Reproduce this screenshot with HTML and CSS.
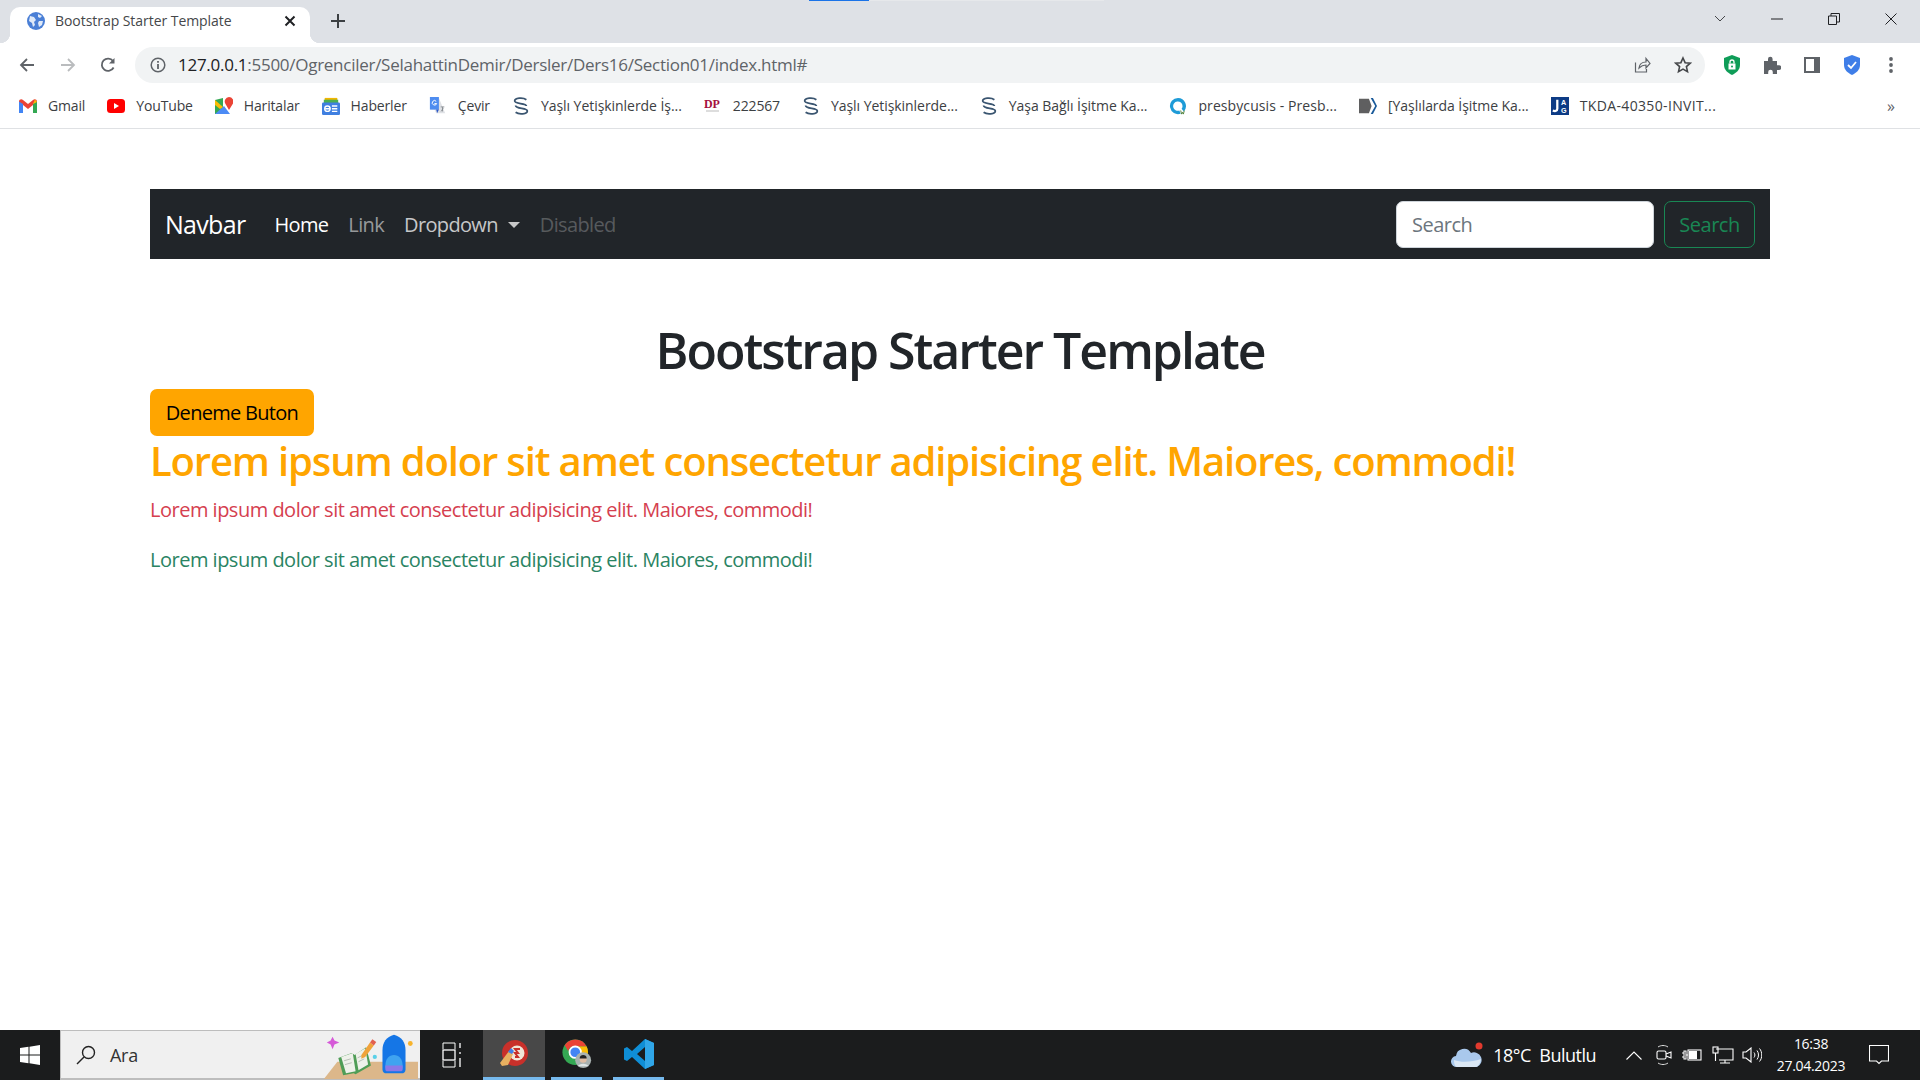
FILE: index.html
```html
<!DOCTYPE html>
<html lang="tr">
<head>
    <meta charset="utf-8">
    <title>Bootstrap Starter Template</title>
    <link rel="stylesheet" href="styles.css">
</head>
<body>
<div class="browser">
    <!-- sekme satiri -->
    <div class="tabstrip">
        <div class="load-line"><span></span></div>
        <div class="tab">
            <svg class="tab-icon" viewBox="0 0 18 18"><circle cx="9" cy="9" r="9" fill="#4a7fd6"/><path d="M3 4l4 1 2 3-2 2 1 3-2 2-1-4-3-2zM11 2l4 2-2 2-2-1zM12 9l4 0-1 4-3 2-1-4z" fill="#dfe9f8"/></svg>
            <span class="tab-title">Bootstrap Starter Template</span>
            <svg class="tab-close" viewBox="0 0 12 12"><path d="M1.5 1.5l9 9M10.5 1.5l-9 9" stroke="#202124" stroke-width="2"/></svg>
        </div>
        <svg class="new-tab" viewBox="0 0 14 14"><path d="M7 0v14M0 7h14" stroke="#3c4043" stroke-width="2"/></svg>
        <div class="window-controls">
            <svg class="wc-list" viewBox="0 0 12 8"><path d="M1 1l5 5 5-5" fill="none" stroke="#45474a" stroke-width="1"/></svg>
            <svg class="wc-min" viewBox="0 0 12 2"><path d="M0 1h12" stroke="#202124" stroke-width="1"/></svg>
            <svg class="wc-max" viewBox="0 0 12 12"><path d="M.5 3h8v8.500h-8zM3 3V.5h8.500v8.500H8.500" fill="none" stroke="#202124" stroke-width="1"/></svg>
            <svg class="wc-close" viewBox="0 0 12 12"><path d="M.5 .5l11 11M11.500 .5l-11 11" stroke="#202124" stroke-width="1"/></svg>
        </div>
    </div>

    <!-- adres satiri -->
    <div class="toolbar">
        <svg class="nav-icon" viewBox="0 0 16 16"><path d="M15 8H2M8 2L2 8l6 6" fill="none" stroke="#5f6368" stroke-width="1.800"/></svg>
        <svg class="nav-icon" viewBox="0 0 16 16"><path d="M1 8h13M8 2l6 6-6 6" fill="none" stroke="#babcbe" stroke-width="1.800"/></svg>
        <svg class="nav-icon" viewBox="0 0 16 16"><path d="M13.600 10.500A6.200 6.200 0 1 1 13 4" fill="none" stroke="#5f6368" stroke-width="1.800"/><path d="M14.500 1v5.500H9z" fill="#5f6368"/></svg>
        <div class="omnibox">
            <svg class="info-icon" viewBox="0 0 16 16"><circle cx="8" cy="8" r="6.800" fill="none" stroke="#5f6368" stroke-width="1.500"/><path d="M8 7v5M8 4v1.800" stroke="#5f6368" stroke-width="1.800"/></svg>
            <span class="url"><b>127.0.0.1</b>:5500/Ogrenciler/SelahattinDemir/Dersler/Ders16/Section01/index.html#</span>
            <svg class="omni-share" viewBox="0 0 18 18"><path d="M2.500 6.500v9.500h11v-3M6 12c.5-4 3-6 7-6V2.500L17 7.500l-4 4.500V9c-3 0-5 1-7 3z" fill="none" stroke="#5f6368" stroke-width="1.200"/></svg>
            <svg class="omni-star" viewBox="0 0 18 18"><path d="M9 2l2.100 4.700 5.100.5-3.800 3.400 1.100 5L9 13.100l-4.500 2.500 1.100-5L1.800 7.200l5.100-.5z" fill="none" stroke="#45474a" stroke-width="1.600"/></svg>
        </div>
        <div class="extensions">
            <svg viewBox="0 0 18 20"><path d="M9 0l8 3v7c0 5-4 8-8 10-4-2-8-5-8-10V3z" fill="#0f9d58"/><rect x="5.500" y="8.500" width="7" height="6" fill="#fff"/><path d="M7 8.500V7a2 2 0 0 1 4 0v1.500" fill="none" stroke="#fff" stroke-width="1.300"/><circle cx="9" cy="11.500" r="1" fill="#0f9d58"/></svg>
            <svg viewBox="0 0 18 18"><path d="M1 5h4V3a2.300 2.300 0 0 1 4.600 0v2H14v4.300h2a2.300 2.300 0 0 1 0 4.600h-2V18H9.800v-2a2.300 2.300 0 0 0-4.600 0v2H1z" fill="#5f6368"/></svg>
            <svg viewBox="0 0 18 18"><path d="M1 1h16v16H1z" fill="#5f6368"/><path d="M3 3h8v12H3z" fill="#fff"/></svg>
            <svg viewBox="0 0 18 20"><path d="M9 0l8 3v7c0 5-4 8-8 10-4-2-8-5-8-10V3z" fill="#3f7ee8"/><path d="M5 10l3 3 5-6" fill="none" stroke="#fff" stroke-width="1.800"/></svg>
            <svg viewBox="0 0 6 18"><circle cx="3" cy="3" r="1.900" fill="#5f6368"/><circle cx="3" cy="9" r="1.900" fill="#5f6368"/><circle cx="3" cy="15" r="1.900" fill="#5f6368"/></svg>
        </div>
    </div>

    <!-- yer imleri -->
    <div class="bookmarks">
        <a class="bookmark"><svg viewBox="0 0 18 14"><path d="M0 2.500V14h4V6l5 4 5-4v8h4V2.500C18 .500 15.500-.500 14 1L9 5 4 1C2.500-.500 0 .500 0 2.500z" fill="#ea4335"/><path d="M0 2.500V14h4V5z" fill="#4285f4"/><path d="M14 5v9h4V2.500z" fill="#34a853"/><path d="M16 .500L14 5l4-2z" fill="#fbbc04"/></svg>Gmail</a>
        <a class="bookmark"><svg viewBox="0 0 18 14"><rect width="18" height="14" rx="3.500" fill="#f00"/><path d="M7 4l5 3-5 3z" fill="#fff"/></svg>YouTube</a>
        <a class="bookmark"><svg viewBox="0 0 18 18"><path d="M0 3l8-2v16l-8 0z" fill="#34a853"/><path d="M0 17l9-8 6 8z" fill="#4c8bf5"/><path d="M0 3l8 7-3 2-5-4z" fill="#fbbc04"/><path d="M14 0a4.500 4.500 0 0 1 4 6.500L14 13 10.500 7A4.500 4.500 0 0 1 14 0z" fill="#ea4335"/></svg>Haritalar</a>
        <a class="bookmark"><svg viewBox="0 0 20 20"><path d="M3 1h14v6H3z" fill="#f2b600"/><path d="M2 3h16v4H2z" fill="#4caf50"/><rect y="6" width="20" height="14" rx="1.500" fill="#3f7fe0"/><path d="M3.500 13h5v-1.500M11 10h6M11 13h6M11 16h6" fill="none" stroke="#fff" stroke-width="1.500"/><circle cx="6" cy="13" r="3" fill="none" stroke="#fff" stroke-width="1.500"/></svg>Haberler</a>
        <a class="bookmark"><svg viewBox="0 0 18 20"><path d="M1 1h9l7 17H7L5 14H1z" fill="#dfe1e5"/><path d="M0 0h10v14H0z" fill="#4e8cf0"/><path d="M7 14h3l-2 4z" fill="#2a56c6"/><path d="M7 4.800a2.500 2.500 0 1 0 .5 2.500H5" fill="none" stroke="#fff" stroke-width="1.100"/><path d="M12 11h4M14 11v5M12.500 16l2.500-4" fill="none" stroke="#80868b" stroke-width=".9"/></svg>Çevir</a>
        <a class="bookmark bm-long"><svg viewBox="0 0 20 20"><path d="M16 3C12 0 3 1 3 4.500 3 8 16 6.500 16 10" fill="none" stroke="#3a5570" stroke-width="2"/><path d="M4 17c4 3 13 2 13-1.500 0-3.500-13-2-13-6" fill="none" stroke="#3a5570" stroke-width="2"/></svg>Yaşlı Yetişkinlerde İş...</a>
        <a class="bookmark"><svg viewBox="0 0 18 18"><text x="0" y="11" class="dp-text">DP</text><path d="M2 14h13" stroke="#bbb" stroke-width="1"/></svg>222567</a>
        <a class="bookmark bm-long"><svg viewBox="0 0 20 20"><path d="M16 3C12 0 3 1 3 4.500 3 8 16 6.500 16 10" fill="none" stroke="#3a5570" stroke-width="2"/><path d="M4 17c4 3 13 2 13-1.500 0-3.500-13-2-13-6" fill="none" stroke="#3a5570" stroke-width="2"/></svg>Yaşlı Yetişkinlerde...</a>
        <a class="bookmark bm-long"><svg viewBox="0 0 20 20"><path d="M16 3C12 0 3 1 3 4.500 3 8 16 6.500 16 10" fill="none" stroke="#3a5570" stroke-width="2"/><path d="M4 17c4 3 13 2 13-1.500 0-3.500-13-2-13-6" fill="none" stroke="#3a5570" stroke-width="2"/></svg>Yaşa Bağlı İşitme Ka...</a>
        <a class="bookmark bm-presby"><svg viewBox="0 0 20 20"><path d="M10 1a9 9 0 1 0 3 17.500l-1.500-3.500A5.200 5.200 0 1 1 15 10c0 1.500-.5 2.500-1 3l2.500 3A9 9 0 0 0 10 1z" fill="#1e9bd7"/><path d="M13 15l1 4 1-2 1 2 1-4" fill="none" stroke="#4a7a30" stroke-width="1"/></svg>presbycusis - Presb...</a>
        <a class="bookmark bm-long"><svg viewBox="0 0 20 18"><path d="M0 1h11l3 8-3 8H0z" fill="#5f5f60"/><path d="M13 0l5 9-5 9h2.500l4.500-9-4.500-9z" fill="#1a5a9a"/></svg>[Yaşlılarda İşitme Ka...</a>
        <a class="bookmark bm-tkda"><svg viewBox="0 0 20 20"><rect width="20" height="20" fill="#0d3b85"/><path d="M7 3v10c0 3-3 3-5 2" fill="none" stroke="#fff" stroke-width="2.500"/><text x="11" y="9" class="jag-text">A</text><text x="11" y="18" class="jag-text">G</text></svg>TKDA-40350-INVIT...</a>
        <span class="bookmark-more">»</span>
    </div>

    <!-- sayfa -->
    <div class="page">
        <div class="container">
            <nav class="navbar">
                <a class="navbar-brand">Navbar</a>
                <ul class="navbar-nav">
                    <li class="nav-link active">Home</li>
                    <li class="nav-link">Link</li>
                    <li class="nav-link dropdown-toggle">Dropdown</li>
                    <li class="nav-link disabled">Disabled</li>
                </ul>
                <form class="search-form">
                    <input class="search-input" type="text" placeholder="Search">
                    <button class="btn-search" type="button">Search</button>
                </form>
            </nav>
            <h1 class="page-title">Bootstrap Starter Template</h1>
            <button class="btn-custom" type="button">Deneme Buton</button>
            <h2 class="lead-orange">Lorem ipsum dolor sit amet consectetur adipisicing elit. Maiores, commodi!</h2>
            <p class="text-danger">Lorem ipsum dolor sit amet consectetur adipisicing elit. Maiores, commodi!</p>
            <p class="text-success">Lorem ipsum dolor sit amet consectetur adipisicing elit. Maiores, commodi!</p>
        </div>
    </div>

    <!-- gorev cubugu -->
    <div class="taskbar">
        <div class="start">
            <svg viewBox="0 0 20 20"><path d="M0 3l8.500-1.200V9.500H0zM9.500 1.700L20 0v9.500H9.500zM0 10.500h8.500v7.700L0 17zM9.500 10.500H20V20L9.500 18.300z" fill="#fff"/></svg>
        </div>
        <div class="task-search">
            <svg class="search-glass" viewBox="0 0 20 20"><circle cx="12.500" cy="7.500" r="6" fill="none" stroke="#222" stroke-width="1.400"/><path d="M8 12l-7 7" stroke="#222" stroke-width="1.500"/></svg>
            <span class="task-search-text">Ara</span>
            <svg class="search-art" viewBox="0 0 100 50">
                <path d="M2 50l14-18h84v18z" fill="#dcb78a"/>
                <path d="M11 6l2 4 5 2-5 2-2 5-2-5-4-2 4-2z" fill="#d65ad8"/>
                <path d="M17 28l14-5 3 2 12-8 5 19-16 9-2-1-11 2z" fill="#4f9d56"/>
                <path d="M20 27l12-4 3 19-10 2zM35 24l10-6 3 17-10 6z" fill="#eef1ea"/>
                <path d="M23 31l7-2M24 35l7-2M37 28l6-3M38 32l6-3" stroke="#a8b0a8" stroke-width=".8"/>
                <path d="M41 25l9-13 4 3-9 12-4 2z" fill="#f0a33a"/>
                <path d="M50 12l2.500-3.500 4 3-2.500 3.500z" fill="#e2604e"/>
                <circle cx="55" cy="27" r="2.200" fill="#5ad0e8"/>
                <path d="M63 20c0-8 4-14 12-16 8 2 12 8 12 16v20c0 3-2 4-4 4H67c-2 0-4-1-4-4z" fill="#1576e6"/>
                <path d="M66 36c0-7 4-11 9-11s9 4 9 11v3H66z" fill="#3fa3f0"/>
                <path d="M66 36h18v4c0 1-1 2-2 2H68c-1 0-2-1-2-2z" fill="#8a78e8"/>
                <circle cx="92" cy="13" r="2.500" fill="#f7b32b"/>
            </svg>
        </div>
        <div class="task-view">
            <svg viewBox="0 0 20 26"><path d="M1 7V1M13 7V1M1 25v-6M13 25v-6M1 1h12M1 25h12" fill="none" stroke="#fff" stroke-width="1"/><rect x="1" y="8" width="12" height="10" fill="none" stroke="#fff" stroke-width="1.300"/><path d="M18 1v5M18 10v2M18 16v9" stroke="#fff" stroke-width="1.300"/></svg>
        </div>
        <div class="task-app active">
            <svg viewBox="0 0 30 30"><circle cx="16" cy="14" r="13" fill="#c8302a"/><circle cx="18" cy="14" r="7.500" fill="#f0e6d8"/><path d="M21 10h-5l3 4h-3l3 4h-3" fill="none" stroke="#c8302a" stroke-width="2"/><path d="M1 24l9-12 4 3-5 11-6 1z" fill="#e8b060"/><path d="M9 13l3-4 3 3-2 3z" fill="#3f7ee8"/></svg>
        </div>
        <div class="task-app">
            <svg viewBox="0 0 34 34"><circle cx="15" cy="15" r="14.500" fill="#34a853"/><path d="M15 .5a14.500 14.500 0 0 1 13 8H14a7 7 0 0 0-7 5L3 7A14.500 14.500 0 0 1 15 .5z" fill="#ea4335"/><path d="M28 8.500a14.500 14.500 0 0 1-10 20.500l4-12-7-8.500z" fill="#fbbc04"/><circle cx="15" cy="15" r="6.500" fill="#4285f4" stroke="#fff" stroke-width="2"/><circle cx="24" cy="24" r="9" fill="#a9b2b0"/><circle cx="24" cy="23" r="4" fill="#e0bea4"/><path d="M20 22c0-5 8-5 8 0z" fill="#222"/><path d="M18 31c1-4 11-4 12 0z" fill="#dfe6e6"/></svg>
        </div>
        <div class="task-app">
            <svg viewBox="0 0 30 30"><path d="M21 0l9 4v22l-9 4L8 18l-5 4-3-1.500v-11L3 8l5 4zM21 8l-8 7 8 7z" fill="#0f8ed6"/><path d="M21 0l9 4v22l-9 4V22 8z" fill="#30a6e8"/></svg>
        </div>
        <div class="tray">
            <svg class="weather" viewBox="0 0 32 26"><path d="M6 25a5.500 5.500 0 0 1-1-11 8 8 0 0 1 15-3 7 7 0 0 1 6 14z" fill="#a9c8ec"/><path d="M3 18c8 3 18 2 27-1-1 5-3 8-6 8H6c-2 0-3-3-3-7z" fill="#dbe7f4"/><circle cx="28" cy="4" r="3.500" fill="#e23a2e"/></svg>
            <span class="weather-text">18°C&nbsp; Bulutlu</span>
            <svg class="tray-chevron" viewBox="0 0 16 9"><path d="M.5 8.500L8 1l7.500 7.500" fill="none" stroke="#fff" stroke-width="1.100"/></svg>
            <svg class="tray-icon" viewBox="0 0 16 20"><path d="M2 2c3-2 7-2 10 0M2 18c3 2 7 2 10 0" fill="none" stroke="#ddd" stroke-width="1"/><rect x="1" y="6" width="9" height="8" rx="1.500" fill="none" stroke="#fff" stroke-width="1.100"/><path d="M10 9l5-2v6l-5-2" fill="none" stroke="#fff" stroke-width="1.100"/></svg>
            <svg class="tray-icon wide" viewBox="0 0 20 14"><path d="M0 5h2M0 9h2M2 3h2v8H2zM4 7h2" fill="none" stroke="#fff" stroke-width="1.100"/><rect x="6" y="2" width="13" height="10" fill="none" stroke="#fff" stroke-width="1.100"/><rect x="7" y="3" width="8" height="8" fill="#fff"/></svg>
            <svg class="tray-icon wider" viewBox="0 0 22 18"><path d="M4 3h17v11H7M13 14v3M8 17h10" fill="none" stroke="#fff" stroke-width="1.100"/><rect x="1" y="1" width="5" height="6" fill="none" stroke="#fff" stroke-width="1.100"/><path d="M3.500 7v8" stroke="#fff" stroke-width="1.100"/></svg>
            <svg class="tray-icon wide vol" viewBox="0 0 20 16"><path d="M1 5h3l5-4v14l-5-4H1z" fill="none" stroke="#fff" stroke-width="1.100"/><path d="M12 5.500c1.200 1.500 1.200 3.500 0 5M15 3.500c2 2.500 2 6.500 0 9M17.500 1.500c3 3.500 3 9.500 0 13" fill="none" stroke="#fff" stroke-width="1"/></svg>
            <div class="clock"><span>16:38</span><span>27.04.2023</span></div>
            <svg class="notify" viewBox="0 0 20 20"><path d="M.5 .5h19v15.500h-7l-2.500 2.500-2.500-2.500h-7z" fill="none" stroke="#fff" stroke-width="1.100"/></svg>
        </div>
    </div>
</div>
</body>
</html>
```

FILE: styles.css
```css
* {
    box-sizing: border-box;
}

html, body {
    margin: 0;
    height: 100%;
    overflow: hidden;
}

body {
    font-family: "Open Sans", "Noto Sans", sans-serif;
    color: #212529;
    background: #ffffff;
}

svg {
    display: block;
    flex: none;
}

.browser {
    display: flex;
    flex-direction: column;
    height: 1080px;
}

/* sekme satiri */
.tabstrip {
    position: relative;
    display: flex;
    align-items: flex-end;
    height: 43px;
    padding-left: 10px;
    background: #dee1e6;
}

.load-line {
    position: absolute;
    top: 0;
    left: 809px;
    width: 295px;
    height: 1px;
    background: #e6e8eb;
}

.load-line span {
    display: block;
    width: 60px;
    height: 1px;
    background: #1a73e8;
}

.tab {
    position: relative;
    display: flex;
    align-items: center;
    width: 300px;
    height: 36px;
    padding: 0 14px 8px 17px;
    background: #ffffff;
    border-radius: 10px 10px 0 0;
}

.tab::before, .tab::after {
    content: "";
    position: absolute;
    bottom: 0;
    width: 10px;
    height: 10px;
}

.tab::before {
    left: -10px;
    background: radial-gradient(circle at 0 0, #dee1e6 10px, #ffffff 10.500px);
}

.tab::after {
    right: -10px;
    background: radial-gradient(circle at 100% 0, #dee1e6 10px, #ffffff 10.500px);
}

.tab-icon {
    width: 18px;
    height: 18px;
}

.tab-title {
    flex: 1;
    margin: 0 0 1px 10px;
    font-size: 14px;
    letter-spacing: -0.05px;
    color: #45474a;
}

.tab-close {
    width: 12px;
    height: 12px;
}

.new-tab {
    width: 14px;
    height: 14px;
    margin: 0 0 15px 21px;
}

.window-controls {
    display: flex;
    align-items: center;
    margin-left: auto;
    height: 38px;
    align-self: flex-start;
}

.wc-list {
    width: 12px;
    height: 8px;
    margin-right: 45px;
}

.wc-min {
    width: 12px;
    height: 2px;
    margin-right: 45px;
}

.wc-max {
    width: 12px;
    height: 12px;
    margin-right: 45px;
}

.wc-close {
    width: 12px;
    height: 12px;
    margin-right: 23px;
}

/* adres satiri */
.toolbar {
    display: flex;
    align-items: center;
    height: 43px;
    padding-left: 19px;
    background: #ffffff;
}

.nav-icon {
    width: 16px;
    height: 16px;
    margin-right: 24.500px;
}

.omnibox {
    display: flex;
    align-items: center;
    width: 1570px;
    height: 36px;
    margin-left: -5.500px;
    padding: 0 13px 0 15px;
    background: #f1f3f4;
    border-radius: 18px;
}

.info-icon {
    width: 16px;
    height: 16px;
}

.url {
    flex: 1;
    margin-left: 12px;
    font-size: 17px;
    letter-spacing: -0.27px;
    color: #5f6368;
}

.url b {
    font-weight: 400;
    color: #202124;
}

.omni-share {
    width: 18px;
    height: 18px;
    margin-right: 23px;
}

.omni-star {
    width: 18px;
    height: 18px;
}

.extensions {
    display: flex;
    align-items: center;
    gap: 22px;
    margin-left: 18px;
}

.extensions svg {
    width: 18px;
    height: 20px;
}

.extensions svg:last-child {
    width: 6px;
    height: 18px;
    margin-left: 5px;
}

/* yer imleri */
.bookmarks {
    display: flex;
    align-items: center;
    height: 43px;
    padding: 0 0 3px 19px;
    background: #ffffff;
    border-bottom: 1px solid #dfe1e4;
}

.bookmark {
    display: flex;
    align-items: center;
    gap: 11px;
    margin-right: 22px;
    font-size: 14px;
    letter-spacing: -0.15px;
    color: #3c4043;
    white-space: nowrap;
}

.bm-long {
    letter-spacing: -0.05px;
}

.bm-presby {
    letter-spacing: 0.09px;
}

.bm-tkda {
    letter-spacing: 0.35px;
}

.bookmark svg {
    width: 18px;
    height: 18px;
}

.bookmark-more {
    margin-left: auto;
    margin-right: 25px;
    font-size: 16px;
    color: #5f6368;
}

.dp-text {
    font-family: "Liberation Serif", serif;
    font-size: 12px;
    font-weight: 700;
    fill: #a5103e;
}

.jag-text {
    font-family: "Liberation Sans", sans-serif;
    font-size: 8px;
    font-weight: 700;
    fill: #ffffff;
}

/* sayfa */
.page {
    flex: 1;
    padding-top: 60px;
}

.container {
    width: 1620px;
    margin: 0 auto;
}

.navbar {
    display: flex;
    align-items: center;
    height: 70px;
    padding: 0 15px;
    background: #212529;
}

.navbar-brand {
    margin-right: 19px;
    font-size: 25px;
    color: #ffffff;
    letter-spacing: -0.7px;
}

.navbar-nav {
    display: flex;
    margin: 0;
    padding: 0;
    list-style: none;
}

.nav-link {
    padding: 0 10px;
    font-size: 20px;
    letter-spacing: -0.65px;
    color: rgba(255, 255, 255, .55);
}

.nav-link.active {
    color: #ffffff;
}

.nav-link.disabled {
    color: rgba(255, 255, 255, .25);
}

.dropdown-toggle {
    color: rgba(255, 255, 255, .75);
}

.dropdown-toggle::after {
    content: "";
    display: inline-block;
    margin-left: 10px;
    vertical-align: 4px;
    border-top: 6px solid;
    border-right: 6px solid transparent;
    border-left: 6px solid transparent;
}

.search-form {
    display: flex;
    gap: 10px;
    margin-left: auto;
}

.search-input {
    width: 258px;
    height: 47px;
    padding: 0 15px;
    font: inherit;
    font-size: 20px;
    letter-spacing: -0.5px;
    border: 1px solid #ced4da;
    border-radius: 7px;
}

.search-input::placeholder {
    color: #6c757d;
}

.btn-search {
    width: 91px;
    height: 47px;
    padding: 0;
    font: inherit;
    font-size: 20px;
    letter-spacing: -0.5px;
    color: #198754;
    background: transparent;
    border: 1px solid #198754;
    border-radius: 7px;
}

.page-title {
    margin: 61px 0 9px;
    font-size: 50px;
    font-weight: 600;
    line-height: 60px;
    text-align: center;
    letter-spacing: -2px;
}

.btn-custom {
    display: block;
    width: 164px;
    height: 47px;
    padding: 0;
    font: inherit;
    font-size: 20px;
    letter-spacing: -0.7px;
    color: #000000;
    background: orange;
    border: none;
    border-radius: 7px;
}

.lead-orange {
    margin: 1px 0 10px;
    font-size: 40px;
    font-weight: 600;
    line-height: 48px;
    letter-spacing: -1.15px;
    color: orange;
}

.text-danger, .text-success {
    margin: 0 0 20px;
    font-size: 20px;
    line-height: 30px;
    letter-spacing: -0.5px;
}

.text-danger {
    color: #d5404f;
}

.text-success {
    color: #2a8463;
}

/* gorev cubugu */
.taskbar {
    display: flex;
    align-items: stretch;
    height: 50px;
    background: #1b1c1d;
}

.start {
    display: flex;
    align-items: center;
    justify-content: center;
    width: 60px;
}

.start svg {
    width: 20px;
    height: 20px;
}

.task-search {
    display: flex;
    align-items: center;
    width: 360px;
    padding-left: 15px;
    background: #f0f0f0;
    border: 1px solid #bdbdbd;
    border-bottom-width: 2px;
    border-right: none;
}

.search-glass {
    width: 20px;
    height: 20px;
}

.task-search-text {
    margin-left: 14px;
    font-size: 18px;
    letter-spacing: -0.3px;
    color: #333333;
}

.search-art {
    width: 100px;
    height: 48px;
    margin-left: auto;
}

.task-view {
    display: flex;
    align-items: center;
    justify-content: center;
    width: 63px;
}

.task-view svg {
    width: 20px;
    height: 26px;
}

.task-app {
    display: flex;
    align-items: center;
    justify-content: center;
    width: 51px;
    margin: 0 5px 0 6px;
    border-bottom: 3px solid #76b9ed;
}

.task-app.active {
    width: 62px;
    margin: 0;
    background: #484848;
}

.task-app svg {
    width: 30px;
    height: 30px;
}

.tray {
    display: flex;
    align-items: center;
    margin-left: auto;
    color: #ffffff;
}

.weather {
    width: 32px;
    height: 26px;
}

.weather-text {
    margin-left: 10px;
    font-size: 18px;
    letter-spacing: -0.5px;
}

.tray-chevron {
    width: 16px;
    height: 9px;
    margin-left: 30px;
}

.tray-icon {
    width: 16px;
    height: 20px;
    margin-left: 14px;
}

.tray-icon.wide {
    width: 20px;
    height: 16px;
    margin-left: 10px;
}

.tray-icon.wider {
    width: 22px;
    height: 18px;
    margin-left: 10px;
}

.tray-icon.vol {
    margin-left: 8px;
}

.clock {
    display: flex;
    flex-direction: column;
    align-items: center;
    width: 84px;
    margin-left: 7px;
    font-size: 14px;
    line-height: 22px;
    letter-spacing: -0.3px;
}

.notify {
    width: 20px;
    height: 20px;
    margin: 0 31px 0 16px;
}
```
